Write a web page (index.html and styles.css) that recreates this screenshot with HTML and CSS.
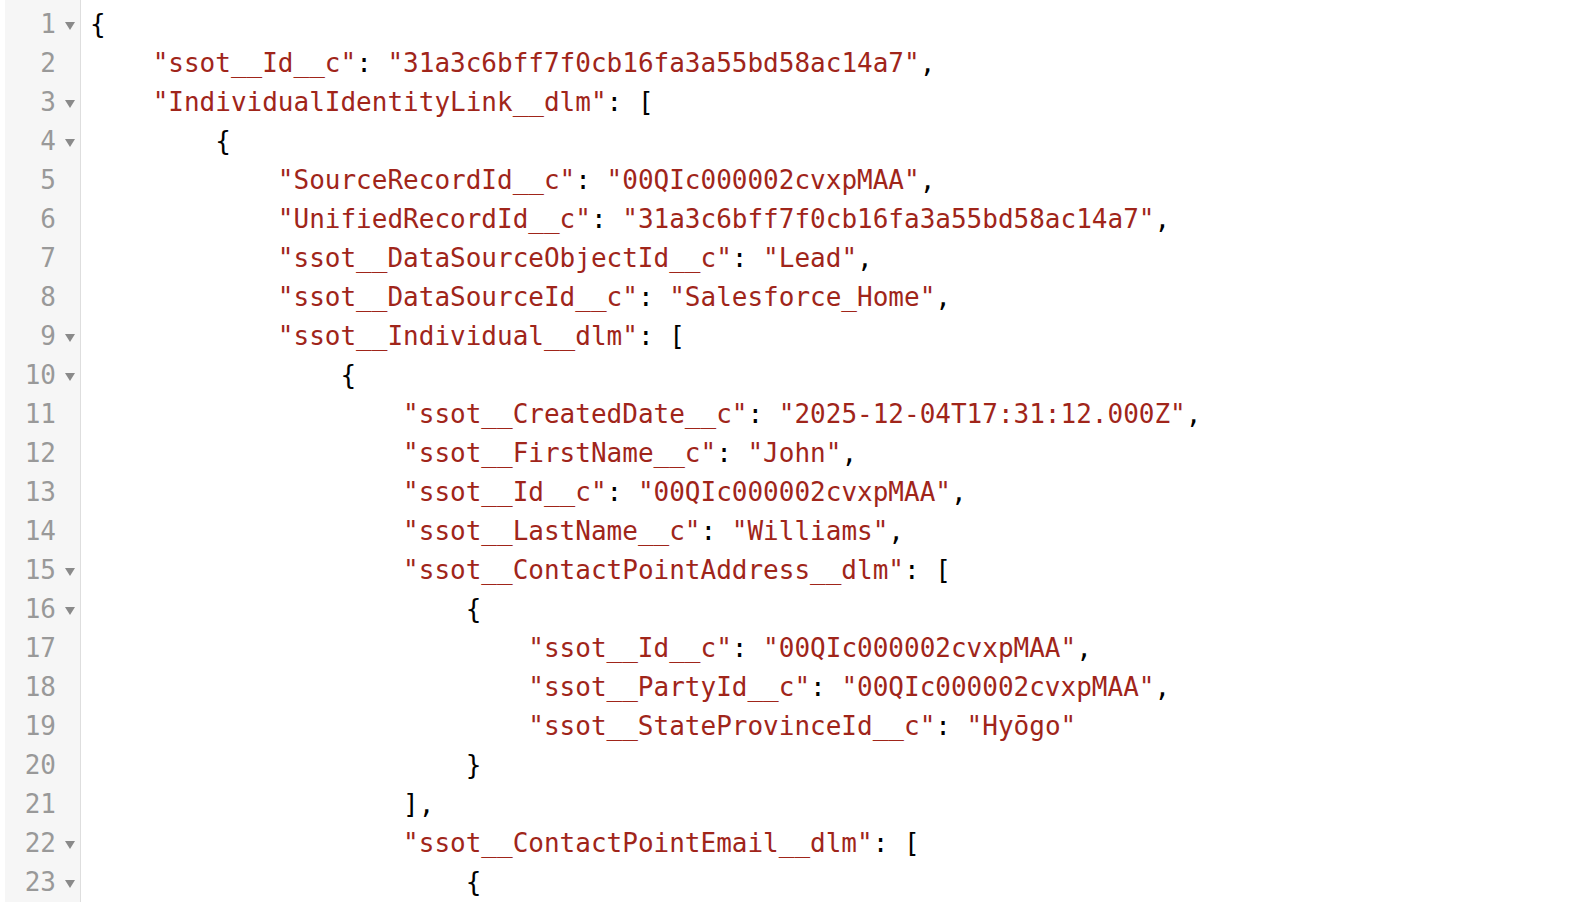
FILE: index.html
```html
<!DOCTYPE html>
<html lang="en">
<head>
<meta charset="utf-8">
<title>JSON</title>
<link rel="stylesheet" href="styles.css">
</head>
<body>
<div class="editor">
  <div class="gutter">
    <div class="gl">1<span class="fold"></span></div>
    <div class="gl">2<span class="nofold"></span></div>
    <div class="gl">3<span class="fold"></span></div>
    <div class="gl">4<span class="fold"></span></div>
    <div class="gl">5<span class="nofold"></span></div>
    <div class="gl">6<span class="nofold"></span></div>
    <div class="gl">7<span class="nofold"></span></div>
    <div class="gl">8<span class="nofold"></span></div>
    <div class="gl">9<span class="fold"></span></div>
    <div class="gl">10<span class="fold"></span></div>
    <div class="gl">11<span class="nofold"></span></div>
    <div class="gl">12<span class="nofold"></span></div>
    <div class="gl">13<span class="nofold"></span></div>
    <div class="gl">14<span class="nofold"></span></div>
    <div class="gl">15<span class="fold"></span></div>
    <div class="gl">16<span class="fold"></span></div>
    <div class="gl">17<span class="nofold"></span></div>
    <div class="gl">18<span class="nofold"></span></div>
    <div class="gl">19<span class="nofold"></span></div>
    <div class="gl">20<span class="nofold"></span></div>
    <div class="gl">21<span class="nofold"></span></div>
    <div class="gl">22<span class="fold"></span></div>
    <div class="gl">23<span class="fold"></span></div>
  </div>
  <div class="code">
<div class="ln">{</div>
<div class="ln">    <span class="s">"ssot__Id__c"</span>: <span class="s">"31a3c6bff7f0cb16fa3a55bd58ac14a7"</span>,</div>
<div class="ln">    <span class="s">"IndividualIdentityLink__dlm"</span>: [</div>
<div class="ln">        {</div>
<div class="ln">            <span class="s">"SourceRecordId__c"</span>: <span class="s">"00QIc000002cvxpMAA"</span>,</div>
<div class="ln">            <span class="s">"UnifiedRecordId__c"</span>: <span class="s">"31a3c6bff7f0cb16fa3a55bd58ac14a7"</span>,</div>
<div class="ln">            <span class="s">"ssot__DataSourceObjectId__c"</span>: <span class="s">"Lead"</span>,</div>
<div class="ln">            <span class="s">"ssot__DataSourceId__c"</span>: <span class="s">"Salesforce_Home"</span>,</div>
<div class="ln">            <span class="s">"ssot__Individual__dlm"</span>: [</div>
<div class="ln">                {</div>
<div class="ln">                    <span class="s">"ssot__CreatedDate__c"</span>: <span class="s">"2025-12-04T17:31:12.000Z"</span>,</div>
<div class="ln">                    <span class="s">"ssot__FirstName__c"</span>: <span class="s">"John"</span>,</div>
<div class="ln">                    <span class="s">"ssot__Id__c"</span>: <span class="s">"00QIc000002cvxpMAA"</span>,</div>
<div class="ln">                    <span class="s">"ssot__LastName__c"</span>: <span class="s">"Williams"</span>,</div>
<div class="ln">                    <span class="s">"ssot__ContactPointAddress__dlm"</span>: [</div>
<div class="ln">                        {</div>
<div class="ln">                            <span class="s">"ssot__Id__c"</span>: <span class="s">"00QIc000002cvxpMAA"</span>,</div>
<div class="ln">                            <span class="s">"ssot__PartyId__c"</span>: <span class="s">"00QIc000002cvxpMAA"</span>,</div>
<div class="ln">                            <span class="s">"ssot__StateProvinceId__c"</span>: <span class="s">"Hyōgo"</span></div>
<div class="ln">                        }</div>
<div class="ln">                    ],</div>
<div class="ln">                    <span class="s">"ssot__ContactPointEmail__dlm"</span>: [</div>
<div class="ln">                        {</div>
  </div>
</div>
</body>
</html>
```

FILE: styles.css
```css
html, body {
  margin: 0;
  padding: 0;
  background: #ffffff;
  height: 100%;
  overflow: hidden;
}

.editor {
  display: flex;
  min-height: 100vh;
  font-family: "DejaVu Sans Mono", "Liberation Mono", monospace;
  font-size: 26px;
  line-height: 39px;
}

.gutter {
  margin-left: 5px;
  width: 76px;
  flex: 0 0 76px;
  box-sizing: border-box;
  background: #f6f6f6;
  border-right: 1px solid #dedede;
  padding-top: 5px;
  color: #999999;
}

.gl {
  height: 39px;
  display: flex;
  justify-content: flex-end;
  align-items: center;
  white-space: pre;
}

.fold, .nofold {
  display: inline-block;
  width: 24px;
  flex: 0 0 24px;
  height: 39px;
  position: relative;
}

.fold::before {
  content: "";
  position: absolute;
  left: 9px;
  top: 17px;
  border-left: 5px solid transparent;
  border-right: 5px solid transparent;
  border-top: 8px solid #8a8a8a;
}

.code {
  flex: 1;
  padding-top: 5px;
  padding-left: 9px;
  color: #000000;
}

.ln {
  height: 39px;
  white-space: pre;
}

.s {
  color: #a0251a;
}
```
